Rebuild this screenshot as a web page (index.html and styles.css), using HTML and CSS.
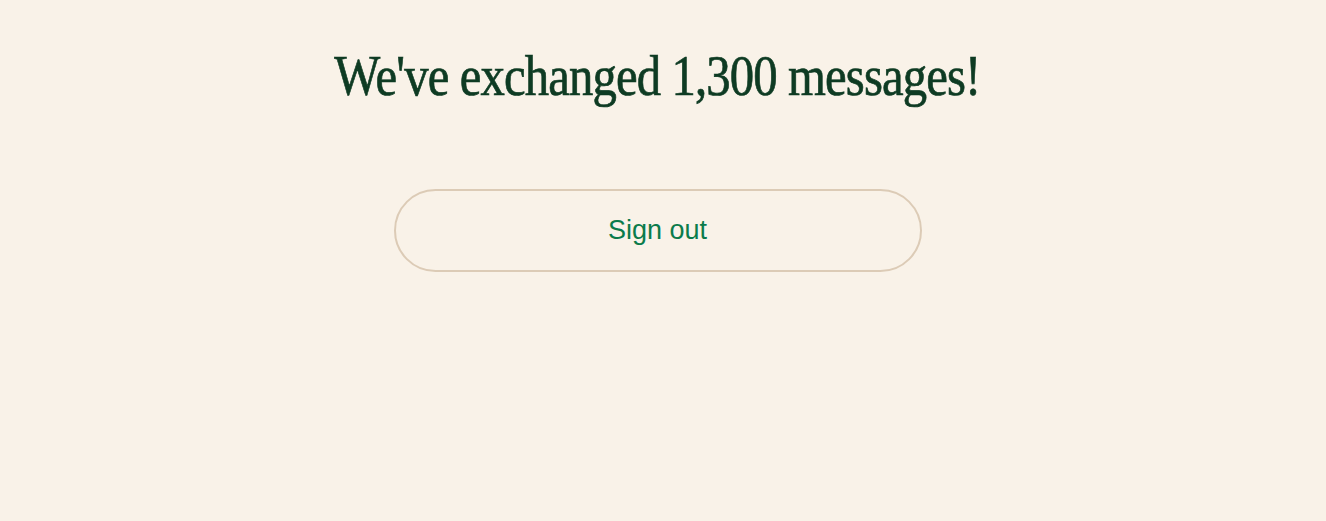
FILE: index.html
```html
<!DOCTYPE html>
<html>
<head>
<meta charset="utf-8">
<link rel="stylesheet" href="styles.css">
</head>
<body>
<main class="page">
  <h1 class="title">We've exchanged 1,300 messages!</h1>
  <button class="signout">Sign out</button>
</main>
</body>
</html>
```
FILE: styles.css
```css
html, body {
  margin: 0;
  background: #f9f2e8;
}
.page {
  display: flex;
  flex-direction: column;
  align-items: center;
  padding: 44px 11px 0 0;
}
.title {
  margin: 0;
  font-family: "Liberation Serif", serif;
  font-weight: 400;
  font-size: 56px;
  line-height: 64px;
  letter-spacing: -1px;
  color: #0e3b23;
  -webkit-text-stroke: 0.7px #0e3b23;
  transform: scaleX(0.87);
}
.signout {
  margin-top: 81px;
  width: 528px;
  height: 83px;
  border: 2px solid #dccbb6;
  border-radius: 42px;
  background: transparent;
  font-family: "Liberation Sans", Arial, sans-serif;
  font-size: 27px;
  color: #0b7b4b;
  cursor: pointer;
}
```
